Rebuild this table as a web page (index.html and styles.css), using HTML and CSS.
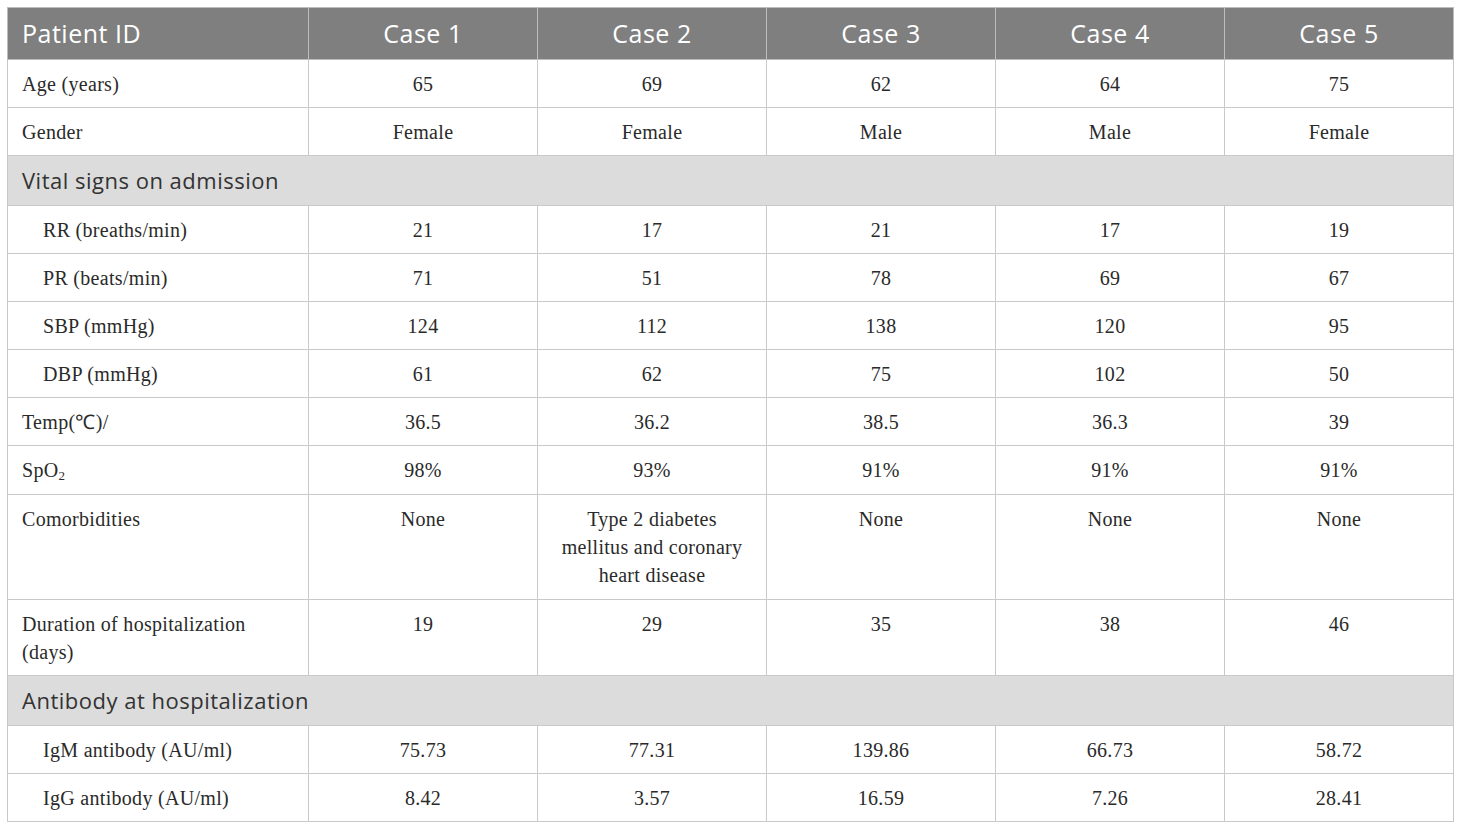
FILE: index.html
```html
<!DOCTYPE html>
<html>
<head>
<meta charset="utf-8">
<link rel="stylesheet" href="styles.css">
</head>
<body>
<table class="data">
  <colgroup>
    <col class="c-label"><col class="c-case"><col class="c-case"><col class="c-case"><col class="c-case"><col class="c-case">
  </colgroup>
  <thead>
    <tr><th class="first">Patient ID</th><th>Case 1</th><th>Case 2</th><th>Case 3</th><th>Case 4</th><th>Case 5</th></tr>
  </thead>
  <tbody>
    <tr><td>Age (years)</td><td>65</td><td>69</td><td>62</td><td>64</td><td>75</td></tr>
    <tr><td>Gender</td><td>Female</td><td>Female</td><td>Male</td><td>Male</td><td>Female</td></tr>
    <tr class="section"><td colspan="6">Vital signs on admission</td></tr>
    <tr><td class="ind">RR (breaths/min)</td><td>21</td><td>17</td><td>21</td><td>17</td><td>19</td></tr>
    <tr><td class="ind">PR (beats/min)</td><td>71</td><td>51</td><td>78</td><td>69</td><td>67</td></tr>
    <tr><td class="ind">SBP (mmHg)</td><td>124</td><td>112</td><td>138</td><td>120</td><td>95</td></tr>
    <tr><td class="ind">DBP (mmHg)</td><td>61</td><td>62</td><td>75</td><td>102</td><td>50</td></tr>
    <tr><td>Temp(℃)/</td><td>36.5</td><td>36.2</td><td>38.5</td><td>36.3</td><td>39</td></tr>
    <tr class="tall"><td>SpO<sub>2</sub></td><td>98%</td><td>93%</td><td>91%</td><td>91%</td><td>91%</td></tr>
    <tr class="tall"><td>Comorbidities</td><td>None</td><td class="wrap">Type 2 diabetes mellitus and coronary heart disease</td><td>None</td><td>None</td><td>None</td></tr>
    <tr><td>Duration of hospitalization<br>(days)</td><td>19</td><td>29</td><td>35</td><td>38</td><td>46</td></tr>
    <tr class="section"><td colspan="6">Antibody at hospitalization</td></tr>
    <tr><td class="ind">IgM antibody (AU/ml)</td><td>75.73</td><td>77.31</td><td>139.86</td><td>66.73</td><td>58.72</td></tr>
    <tr><td class="ind">IgG antibody (AU/ml)</td><td>8.42</td><td>3.57</td><td>16.59</td><td>7.26</td><td>28.41</td></tr>
  </tbody>
</table>
</body>
</html>
```
FILE: styles.css
```css
html, body {
  margin: 0;
  padding: 0;
  background: #ffffff;
}
body {
  padding: 7px 8px 8px 7px;
}
.data {
  border-collapse: collapse;
  table-layout: fixed;
  width: 1446px;
  font-family: "Liberation Serif", "Times New Roman", serif;
  font-size: 20px;
  letter-spacing: 0.3px;
  color: #2a2a2a;
}
.c-label { width: 301px; }
.c-case { width: 229px; }
.data th, .data td {
  border: 1px solid #c9c9c9;
  vertical-align: top;
}
.data th {
  background: #7f7f7f;
  color: #ffffff;
  font-family: "Open Sans", "Liberation Sans", sans-serif;
  font-weight: 400;
  font-size: 25px;
  letter-spacing: 0.5px;
  line-height: 32px;
  height: 52px;
  padding: 9px 14px 10px;
  box-sizing: border-box;
  text-align: center;
  vertical-align: middle;
  border-color: #bdbdbd;
}
.data th.first { text-align: left; }
.data td {
  padding: 10px 14px 9px;
  line-height: 28px;
  text-align: center;
}
.data tr.tall td { padding-bottom: 10px; }
.data td:first-child { text-align: left; }
.data td.ind { padding-left: 35px; }
.data td.wrap { padding-left: 22px; padding-right: 22px; }
.data sub {
  font-size: 0.65em;
  vertical-align: -0.25em;
  line-height: 0;
}
.section td {
  background: #dcdcdc;
  font-family: "Open Sans", "Liberation Sans", sans-serif;
  font-size: 22px;
  letter-spacing: 0.5px;
  color: #333333;
  text-align: left;
  padding: 10px 14px 11px;
  line-height: 28px;
}
```
